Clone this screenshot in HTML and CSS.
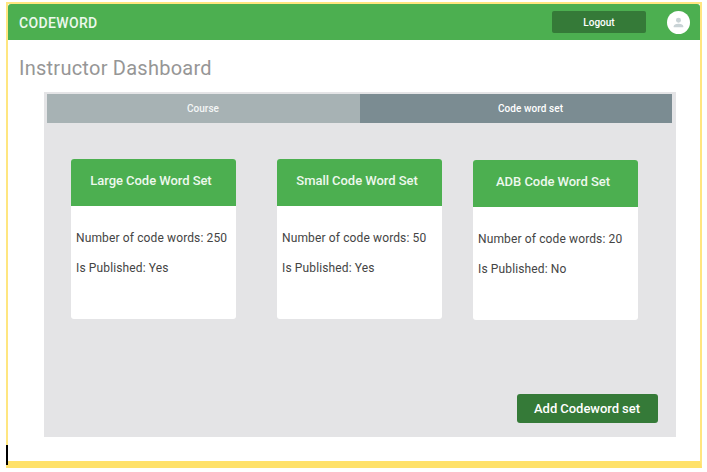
FILE: index.html
```html
<!DOCTYPE html>
<html lang="en">
<head>
<meta charset="utf-8">
<title>Instructor Dashboard</title>
<link rel="stylesheet" href="styles.css">
</head>
<body>
<div class="frame">
  <header class="topbar">
    <span class="brand">CODEWORD</span>
    <button class="logout">Logout</button>
    <svg class="avatar" viewBox="0 0 24 24"><circle cx="12" cy="12" r="12" fill="#fff"/><circle cx="12" cy="9.6" r="2.6" fill="#c9d3d6"/><path d="M7 17v-1.2c0-1.8 3.3-2.6 5-2.6s5 .8 5 2.6V17z" fill="#c9d3d6"/></svg>
  </header>
  <h1 class="title">Instructor Dashboard</h1>
  <main class="panel">
    <nav class="tabs"><span class="tab">Course</span><span class="tab active">Code word set</span></nav>
    <div class="cards">
      <section class="card"><h2>Large Code Word Set</h2><p>Number of code words: 250</p><p>Is Published: Yes</p></section>
      <section class="card"><h2>Small Code Word Set</h2><p>Number of code words: 50</p><p>Is Published: Yes</p></section>
      <section class="card last"><h2>ADB Code Word Set</h2><p>Number of code words: 20</p><p>Is Published: No</p></section>
    </div>
    <button class="add">Add Codeword set</button>
  </main>
  <span class="caret"></span>
</div>
</body>
</html>
```
FILE: styles.css
```css
* { box-sizing: border-box; }
body { margin: 0; background: #fff; font-family: Roboto, sans-serif; }
h1, h2, p { margin: 0; }
button { border: 0; padding: 0; color: #fff; font-family: inherit; font-weight: 500; }
.frame {
  position: relative;
  width: 696px;
  height: 466px;
  margin: 2px 0 0 6px;
  border: 2px solid #ffe680;
  border-bottom: 7px solid #ffe169;
}
.topbar {
  display: flex;
  align-items: center;
  height: 36px;
  padding: 0 10px 0 11px;
  background: #4caf50;
  border-radius: 3px 3px 0 0;
}
.brand { flex: 1; padding-top: 2px; color: #edf8ed; font-size: 14px; font-weight: 500; letter-spacing: 0.35px; }
.logout {
  width: 94px;
  height: 22px;
  margin-right: 21px;
  border-radius: 2px;
  background: #357a38;
  font-size: 10px;
}
.avatar { width: 23px; height: 23px; }
.title {
  height: 52px;
  padding-left: 11px;
  color: #969696;
  font-size: 20px;
  font-weight: 400;
  letter-spacing: 0.25px;
  line-height: 56px;
}
.panel {
  display: flex;
  flex-direction: column;
  width: 632px;
  height: 345px;
  margin-left: 35.5px;
  padding: 2px 4px 14px 3px;
  background: #e4e4e6;
}
.tabs { display: grid; grid-template-columns: 313px 1fr; height: 29px; }
.tab {
  background: #a7b2b4;
  color: #f4f6f6;
  font-size: 10px;
  font-weight: 500;
  line-height: 29px;
  text-align: center;
}
.tab.active { padding-left: 30px; background: #7b8c92; color: #fff; letter-spacing: 0.07px; }
.cards { display: flex; padding: 36px 0 0 24.5px; }
.card {
  width: 165px;
  height: 160px;
  margin-right: 41px;
  overflow: hidden;
  border-radius: 3px;
  background: #fff;
}
.card.last { margin: 1px 0 0 -10px; }
.card h2 {
  height: 47px;
  margin-bottom: 17px;
  padding-right: 5px;
  background: #4caf50;
  color: #edf8ed;
  font-size: 13px;
  font-weight: 500;
  letter-spacing: -0.05px;
  line-height: 44px;
  text-align: center;
}
.card p { padding-left: 5px; color: #444; font-size: 12px; letter-spacing: 0.13px; line-height: 30px; white-space: nowrap; }
.add {
  width: 141px;
  height: 29px;
  margin: auto 14px 0 auto;
  border-radius: 3px;
  background: #357a38;
  font-size: 13px;
  letter-spacing: -0.05px;
}
.caret { position: absolute; left: -2px; bottom: -4px; width: 2px; height: 20px; background: #000; }
```
